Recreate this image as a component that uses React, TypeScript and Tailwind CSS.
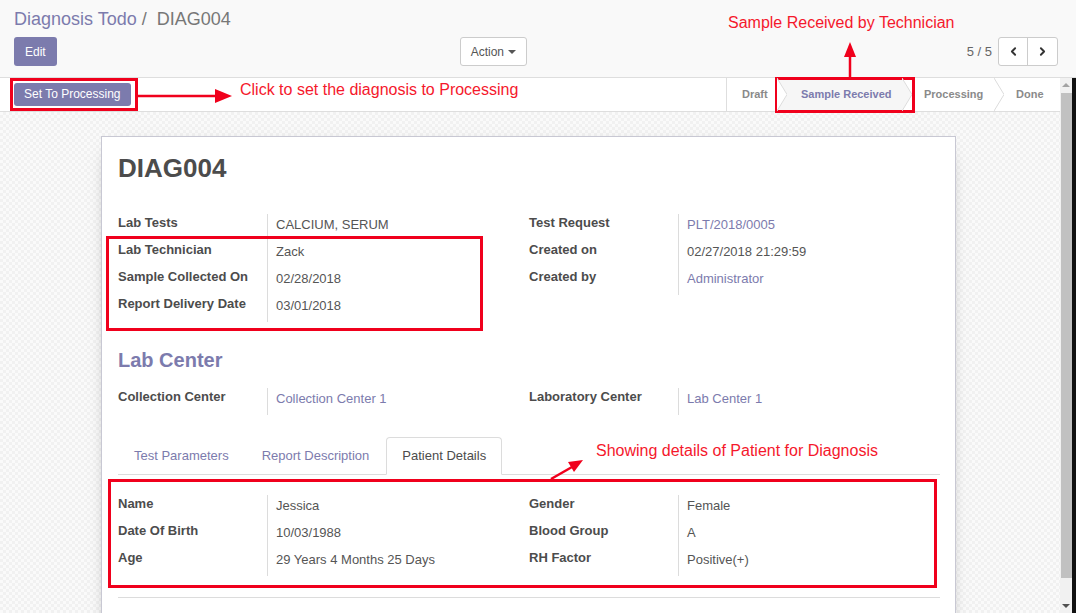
import { ChevronLeft, ChevronRight } from "lucide-react";

type Field = { label: string; value: string; link?: boolean };

// one label / value line of an Odoo form group
function FieldRow({ label, value, link }: Field) {
  return (
    <div className="flex h-[27px]">
      <div className="w-[150px] shrink-0 border-r border-[#dcdcdc] font-bold leading-[18px] text-[#4c4c4c]">
        {label}
      </div>
      <div className={link ? "pl-[8px] pt-[2px] leading-[18px] text-[#7c7bad]" : "pl-[8px] pt-[2px] leading-[18px] text-[#555]"}>
        {value}
      </div>
    </div>
  );
}

function FieldGroup({ fields }: { fields: Field[] }) {
  return (
    <div className="flex flex-col">
      {fields.map((f) => (
        <FieldRow key={f.label} {...f} />
      ))}
    </div>
  );
}

function ControlPanel() {
  return (
    <div className="h-[78px] shrink-0 border-b border-[#dedede] bg-[#f9f9f9] pl-[14px] pr-[18px]">
      <div className="pt-[9px] text-[18px] leading-[20px]">
        <span className="text-[#7c7bad]">Diagnosis Todo</span>
        <span className="px-[5px] text-[#777]">/</span>
        <span className="pl-[5px] text-[#777]">DIAG004</span>
      </div>
      <div className="mt-[8px] flex h-[29px] items-center">
        <button className="h-[29px] rounded-[3px] bg-[#7c7bad] px-[11px] text-[12px] text-white">Edit</button>
        <button className="ml-[403px] flex h-[29px] items-center rounded-[3px] border border-[#ccc] bg-white px-[10px] text-[12px] text-[#555]">
          Action
          <span className="ml-[4px] h-0 w-0 border-x-[4px] border-t-[4px] border-x-transparent border-t-[#555]" />
        </button>
        <div className="ml-auto flex items-center">
          <span className="mr-[6px] text-[13px] text-[#666]">5 / 5</span>
          <div className="flex h-[29px] rounded-[3px] border border-[#ccc] bg-white">
            <button className="flex w-[29px] items-center justify-center border-r border-[#ccc] text-[#333]">
              <ChevronLeft size={13} strokeWidth={3.5} />
            </button>
            <button className="flex w-[29px] items-center justify-center text-[#333]">
              <ChevronRight size={13} strokeWidth={3.5} />
            </button>
          </div>
        </div>
      </div>
    </div>
  );
}

const stages = [
  { name: "Draft", w: "w-[50px] pl-[15px]", active: false, arrow: true },
  { name: "Sample Received", w: "w-[125px] pl-[24px]", active: true, arrow: true },
  { name: "Processing", w: "w-[92px] pl-[22px]", active: false, arrow: true },
  { name: "Done", w: "w-[66px] pl-[22px]", active: false, arrow: false },
];

function StatusBar() {
  return (
    <div className="flex h-[34px] shrink-0 items-center border-b border-[#dedede] bg-white pl-[14px]">
      <button className="h-[23px] rounded-[3px] bg-[#7c7bad] px-[10px] text-[12px] leading-[17px] text-white">
        Set To Processing
      </button>
      <div className="ml-auto flex h-full border-l border-[#dedede]">
        {stages.map((s) => (
          <div
            key={s.name}
            className={`relative flex h-full items-center whitespace-nowrap text-[11px] font-bold ${s.w} ${
              s.active ? "bg-[#f6f6f6] text-[#7c7bad]" : "bg-white text-[#8a8a8a]"
            }`}
          >
            {s.name}
            {s.arrow && (
              <svg className="absolute left-full top-0 z-10 h-[33px] w-[10px]" viewBox="0 0 10 33">
                <polygon points="0,0 10,16.5 0,33" fill={s.active ? "#f6f6f6" : "#ffffff"} />
                <polyline points="0,0 10,16.5 0,33" fill="none" stroke="#dcdcdc" strokeWidth="1" />
              </svg>
            )}
          </div>
        ))}
      </div>
    </div>
  );
}

function Sheet() {
  return (
    <div className="ml-[101px] mt-[24px] min-h-[560px] w-[855px] border border-[#c8c8d3] bg-white pb-[40px] pl-[16px] pr-[15px] pt-[16px] shadow-[0_5px_20px_-15px_black]">
      <h1 className="text-[26px] font-bold leading-[31px] text-[#4c4c4c]">DIAG004</h1>

      <div className="mt-[30px] grid grid-cols-2">
        <FieldGroup
          fields={[
            { label: "Lab Tests", value: "CALCIUM, SERUM" },
            { label: "Lab Technician", value: "Zack" },
            { label: "Sample Collected On", value: "02/28/2018" },
            { label: "Report Delivery Date", value: "03/01/2018" },
          ]}
        />
        <FieldGroup
          fields={[
            { label: "Test Request", value: "PLT/2018/0005", link: true },
            { label: "Created on", value: "02/27/2018 21:29:59" },
            { label: "Created by", value: "Administrator", link: true },
          ]}
        />
      </div>

      <h2 className="mt-[26px] text-[20px] font-bold leading-[24px] text-[#7c7bad]">Lab Center</h2>

      <div className="mt-[16px] grid grid-cols-2">
        <FieldGroup fields={[{ label: "Collection Center", value: "Collection Center 1", link: true }]} />
        <FieldGroup fields={[{ label: "Laboratory Center", value: "Lab Center 1", link: true }]} />
      </div>

      {/* tabs */}
      <div className="mt-[22px] flex h-[38px] border-b border-[#dcdcdc]">
        <div className="mr-[1px] h-[37px] border border-transparent px-[15px] pt-[9px] leading-[18px] text-[#7c7bad]">
          Test Parameters
        </div>
        <div className="mr-[1px] h-[37px] border border-transparent px-[15px] pt-[9px] leading-[18px] text-[#7c7bad]">
          Report Description
        </div>
        <div className="h-[38px] rounded-t-[4px] border border-b-white border-[#dcdcdc] bg-white px-[15px] pt-[9px] leading-[18px] text-[#4c4c4c]">
          Patient Details
        </div>
      </div>

      <div className="grid grid-cols-2 pt-[20px]">
        <FieldGroup
          fields={[
            { label: "Name", value: "Jessica" },
            { label: "Date Of Birth", value: "10/03/1988" },
            { label: "Age", value: "29 Years 4 Months 25 Days" },
          ]}
        />
        <FieldGroup
          fields={[
            { label: "Gender", value: "Female" },
            { label: "Blood Group", value: "A" },
            { label: "RH Factor", value: "Positive(+)" },
          ]}
        />
      </div>

      <div className="mt-[21px] border-t border-[#dcdcdc]" />
    </div>
  );
}

function Scrollbar() {
  return (
    <div className="flex w-[12px] shrink-0 flex-col items-center bg-[#f1f1f1]">
      <div className="mt-[5px] h-0 w-0 border-x-[4px] border-b-[4px] border-x-transparent border-b-[#a3a3a3]" />
      <div className="mt-[6px] h-[485px] w-[11px] self-end bg-[#c1c1c1]" />
      <div className="mt-auto mb-[5px] h-0 w-0 border-x-[4px] border-t-[4px] border-x-transparent border-t-[#505050]" />
    </div>
  );
}

// red callouts drawn on top of the screenshot
function Annotations() {
  const red = "#f0001c";
  return (
    <div className="pointer-events-none absolute inset-0">
      <div className="absolute left-[10px] top-[78px] h-[33px] w-[128px] border-[3px] border-[#f0001c]" />
      <div className="absolute left-[775px] top-[77px] h-[36px] w-[140px] border-[3px] border-[#f0001c]" />
      <div className="absolute left-[106px] top-[236px] h-[95px] w-[377px] border-[3px] border-[#f0001c]" />
      <div className="absolute left-[108px] top-[479px] h-[109px] w-[829px] border-[3px] border-[#f0001c]" />

      <div className="absolute left-[240px] top-[81px] whitespace-nowrap text-[16px] leading-[18px] text-[#f5182c]">
        Click to set the diagnosis to Processing
      </div>
      <div className="absolute left-[728px] top-[14px] whitespace-nowrap text-[16px] leading-[18px] text-[#f5182c]">
        Sample Received by Technician
      </div>
      <div className="absolute left-[596px] top-[442px] whitespace-nowrap text-[16px] leading-[18px] text-[#f5182c]">
        Showing details of Patient for Diagnosis
      </div>

      <svg className="absolute left-0 top-0" width="1076" height="613">
        <line x1="138" y1="96" x2="218" y2="96" stroke={red} strokeWidth="2.5" />
        <polygon points="215,89 232,96 215,103" fill={red} />
        <line x1="850" y1="77" x2="850" y2="55" stroke={red} strokeWidth="2.5" />
        <polygon points="844,57 850,42 856,57" fill={red} />
        <line x1="551" y1="479" x2="572" y2="467" stroke={red} strokeWidth="2.5" />
        <polygon points="574,472 583,460 568,462" fill={red} />
      </svg>
    </div>
  );
}

export default function App() {
  return (
    <div className="relative flex h-[613px] w-[1076px] flex-col overflow-hidden bg-white font-['Liberation_Sans',Arial,sans-serif] text-[13px] text-[#4c4c4c]">
      <ControlPanel />
      <div className="flex min-h-0 flex-1">
        <div className="flex min-w-0 flex-1 flex-col">
          <StatusBar />
          <div className="flex-1 overflow-hidden bg-[repeating-conic-gradient(#f1f1f1_0%_25%,#fafafa_0%_50%)] bg-[length:6px_6px]">
            <Sheet />
          </div>
        </div>
        <Scrollbar />
        <div className="w-[4px] shrink-0 bg-[#111]" />
      </div>
      <Annotations />
    </div>
  );
}
